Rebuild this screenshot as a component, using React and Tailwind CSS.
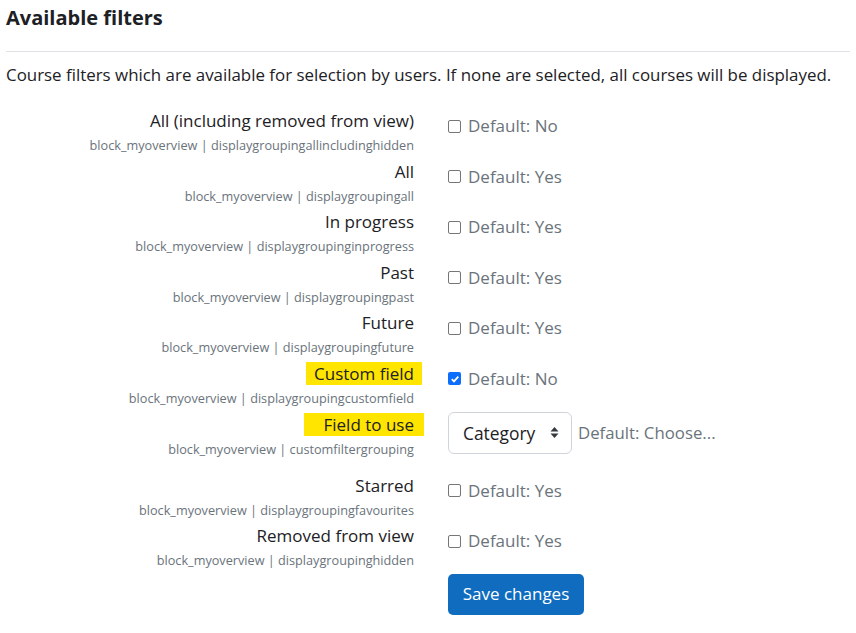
const rows = [
  { label: 'All (including removed from view)', name: 'displaygroupingallincludinghidden', def: 'No' },
  { label: 'All', name: 'displaygroupingall', def: 'Yes' },
  { label: 'In progress', name: 'displaygroupinginprogress', def: 'Yes' },
  { label: 'Past', name: 'displaygroupingpast', def: 'Yes' },
  { label: 'Future', name: 'displaygroupingfuture', def: 'Yes' },
  { label: 'Custom field', name: 'displaygroupingcustomfield', def: 'No', checked: true, mark: 'pl-[8px] pr-[8px] -mr-[8px]' },
  { label: 'Field to use', name: 'customfiltergrouping', select: true, mark: 'pl-[20px] pr-[10px] -mr-[10px]' },
  { label: 'Starred', name: 'displaygroupingfavourites', def: 'Yes' },
  { label: 'Removed from view', name: 'displaygroupinghidden', def: 'Yes' },
];

const Checkbox = ({ checked }) =>
  checked ? (
    <span className="w-[13px] h-[13px] rounded-[2px] bg-[#0d6efd] flex items-center justify-center shrink-0">
      <svg width="10" height="10" viewBox="0 0 10 10">
        <path d="M1.8 5.2 L4 7.4 L8.3 2.6" fill="none" stroke="#fff" strokeWidth="1.8" />
      </svg>
    </span>
  ) : (
    <span className="w-[13px] h-[13px] rounded-[2px] border border-[#767676] bg-white shrink-0" />
  );

export default function App() {
  return (
    <div className="bg-white min-h-screen px-[6px] text-[#1d2125] text-[17px] leading-[24px]" style={{ fontFamily: '"Open Sans", "Noto Sans", sans-serif' }}>
      <h3 className="text-[20px] font-bold pt-[6px] leading-[24px]">Available filters</h3>
      <div className="border-t border-[#dee2e6] mt-[21px]" />
      <p className="mt-[11px] text-[16.9px]">
        Course filters which are available for selection by users. If none are selected, all courses will be displayed.
      </p>
      <div className="mt-[22px]">
        {rows.map((r) => (
          <div key={r.name} className={`flex ${r.select ? 'h-[61px]' : 'h-[50.6px]'}`}>
            <div className="w-[408px] text-right shrink-0">
              <div>
                {r.mark ? <span className={`bg-[#ffe500] ${r.mark}`}>{r.label}</span> : r.label}
              </div>
              <div className="text-[12.7px] leading-[22px] text-[#6a737b] mt-[1px]">
                block_myoverview | {r.name}
              </div>
            </div>
            <div className="ml-[34px]">
              {r.select ? (
                <div className="flex items-center gap-[6px] -mt-[1px]">
                  <div className="w-[124px] h-[42px] border border-[#ced4da] rounded-[6px] flex items-center justify-between pl-[14px] pr-[12px] text-[#1d2125] text-[17.4px]">
                    <span>Category</span>
                    <svg width="9" height="13" viewBox="0 0 9 13">
                      <path d="M4.5 1 L8.5 5.5 L0.5 5.5 Z M4.5 12 L8.5 7.5 L0.5 7.5 Z" fill="#343a40" />
                    </svg>
                  </div>
                  <span className="text-[#6a737b] text-[16.8px]">Default: Choose...</span>
                </div>
              ) : (
                <div className="flex items-center gap-[7px] mt-[5px] text-[#6a737b]">
                  <Checkbox checked={r.checked} />
                  <span>Default: {r.def}</span>
                </div>
              )}
            </div>
          </div>
        ))}
        <div className="ml-[442px] -mt-[1px]">
          <button className="w-[136px] h-[41px] bg-[#0f6cbf] text-white rounded-[5px] text-[17px]">
            Save changes
          </button>
        </div>
      </div>
    </div>
  );
}
